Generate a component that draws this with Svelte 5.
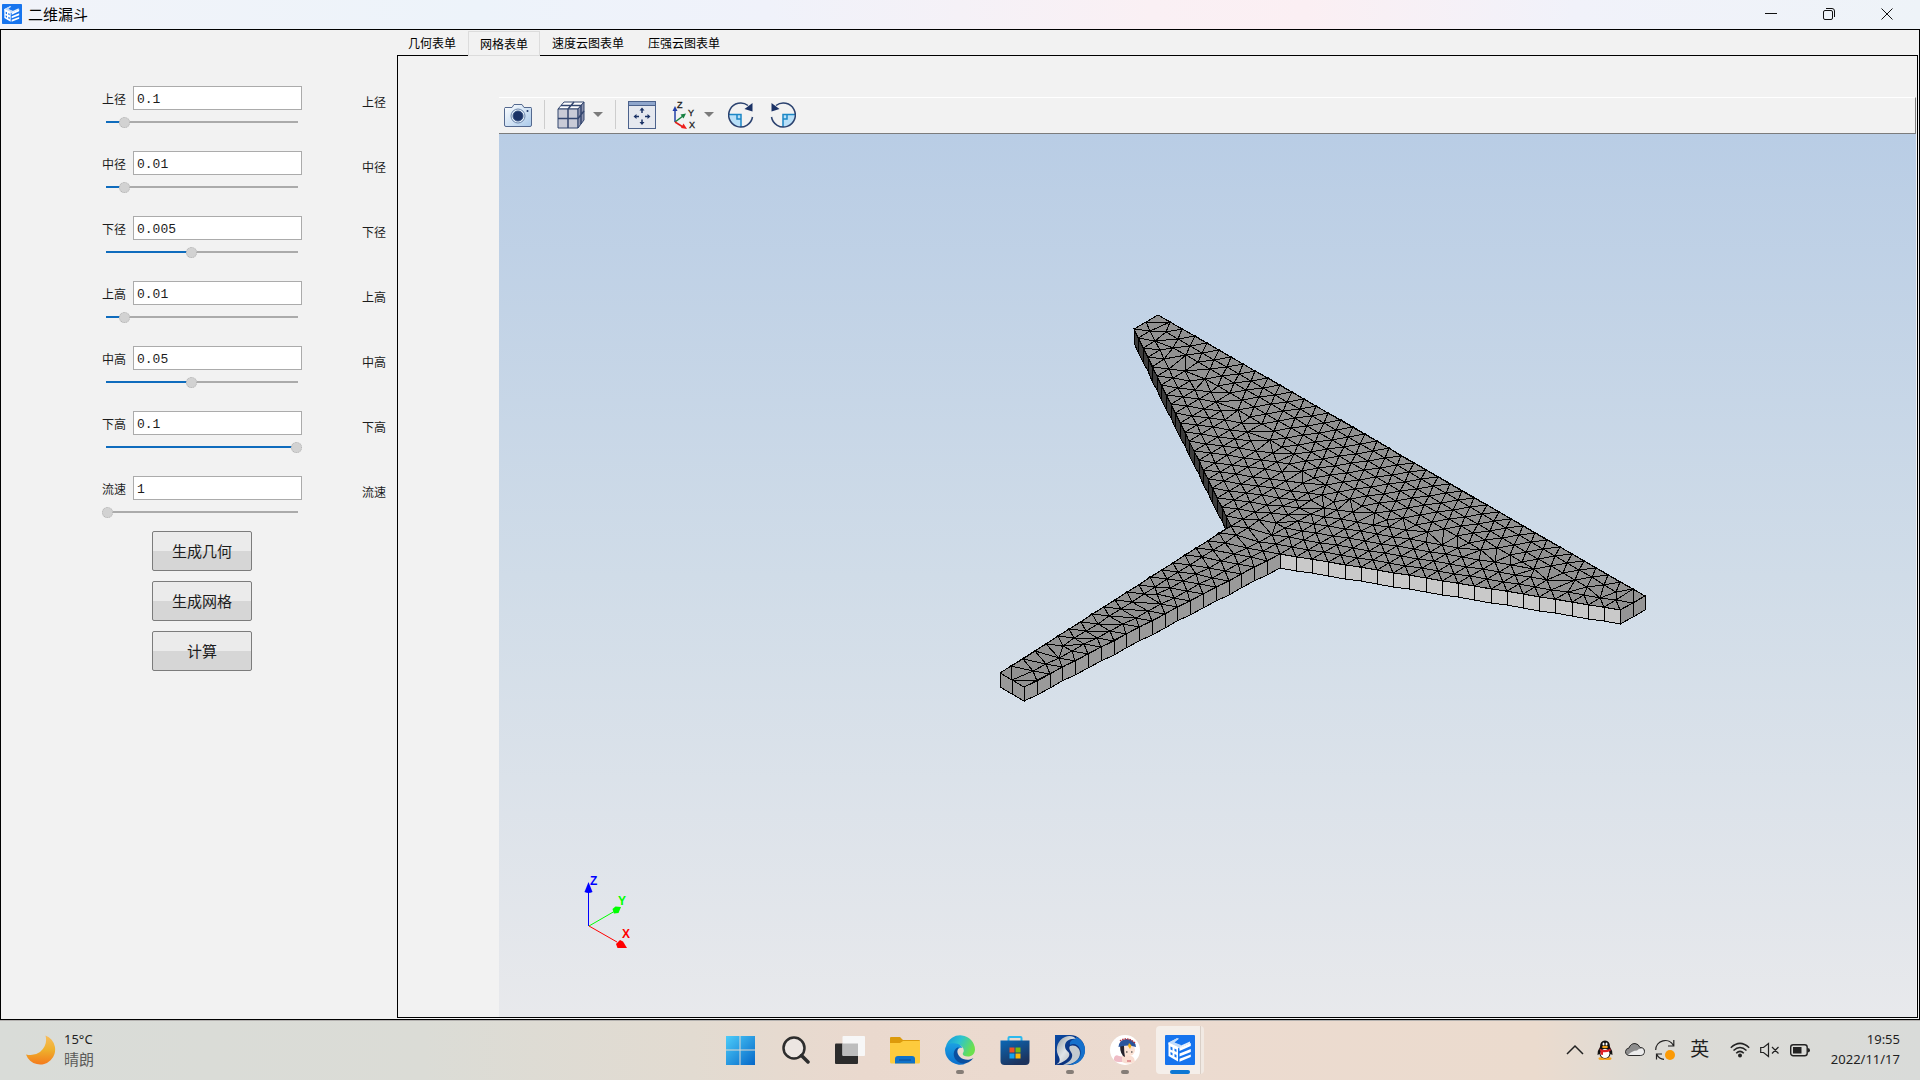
<script>
  const tabs = ["几何表单", "网格表单", "速度云图表单", "压强云图表单"]
  let activeTab = $state("网格表单")

  let fields = $state([
    { id: "top-radius", label: "上径", value: "0.1", level: 10 },
    { id: "mid-radius", label: "中径", value: "0.01", level: 10 },
    { id: "low-radius", label: "下径", value: "0.005", level: 45 },
    { id: "top-height", label: "上高", value: "0.01", level: 10 },
    { id: "mid-height", label: "中高", value: "0.05", level: 45 },
    { id: "low-height", label: "下高", value: "0.1", level: 100 },
    { id: "speed", label: "流速", value: "1", level: 1 },
  ])

  const actions = ["生成几何", "生成网格", "计算"]

  // funnel outline, model units scaled to screen
  const SCALE = 2810
  const STEP = 0.005 * SCALE
  const DEPTH = 14
  const [r1, r2, r3] = [0.1, 0.01, 0.005].map(r => r * SCALE)
  const [h1, h2, h3] = [0.01, 0.05, 0.1].map(h => h * SCALE)
  const outline = [
    [-r1, 0],
    [r1, 0],
    [r1, -h1],
    [r2, -h1 - h2],
    [r3, -h1 - h2 - h3],
    [-r3, -h1 - h2 - h3],
    [-r2, -h1 - h2],
    [-r1, -h1],
  ]

  const project = ([x, y]) => [
    659 + (x + r1 + y) * 0.866,
    181 + (x + r1 - y) * 0.5,
  ]

  const edges = outline.map((a, i) => {
    const b = outline[(i + 1) % outline.length]
    const length = Math.hypot(b[0] - a[0], b[1] - a[1])
    const count = Math.round(length / STEP)
    const dir = [(b[0] - a[0]) / length, (b[1] - a[1]) / length]
    return { a, b, length, count, dir, step: length / count }
  })

  function inside([x, y]) {
    let hit = false
    for (const { a, b } of edges) {
      if (a[1] > y !== b[1] > y) {
        const cross = a[0] + ((y - a[1]) / (b[1] - a[1])) * (b[0] - a[0])
        if (x < cross) hit = !hit
      }
    }
    return hit
  }

  function distance([x, y], { a, dir, length }) {
    const t = (x - a[0]) * dir[0] + (y - a[1]) * dir[1]
    const c = Math.max(0, Math.min(length, t))
    return Math.hypot(x - a[0] - c * dir[0], y - a[1] - c * dir[1])
  }

  // rows of points grow inwards from every side until they meet
  function seed() {
    const points = []
    for (const e of edges) {
      for (let i = 0; i < e.count; i++) {
        const t = i * e.step
        points.push([e.a[0] + t * e.dir[0], e.a[1] + t * e.dir[1]])
      }
    }
    for (let row = 1; row < 20; row++) {
      for (const e of edges) {
        if (e.count < 3) continue
        const off = row * STEP * 0.866
        for (let i = -12; i < e.count + 12; i++) {
          const t = (i + (row % 2) / 2) * e.step
          const p = [
            e.a[0] + t * e.dir[0] + off * e.dir[1],
            e.a[1] + t * e.dir[1] - off * e.dir[0],
          ]
          if (!inside(p)) continue
          const own = distance(p, e)
          if (edges.some(o => o.count > 2 && distance(p, o) < own - 4)) continue
          if (points.some(q => Math.hypot(p[0] - q[0], p[1] - q[1]) < STEP * 0.72)) continue
          points.push(p)
        }
      }
    }
    return points
  }

  function circle(pts, ids) {
    const [[ax, ay], [bx, by], [cx, cy]] = ids.map(i => pts[i])
    const d = 2 * (ax * (by - cy) + bx * (cy - ay) + cx * (ay - by))
    const a2 = ax * ax + ay * ay
    const b2 = bx * bx + by * by
    const c2 = cx * cx + cy * cy
    const x = (a2 * (by - cy) + b2 * (cy - ay) + c2 * (ay - by)) / d
    const y = (a2 * (cx - bx) + b2 * (ax - cx) + c2 * (bx - ax)) / d
    return { ids, x, y, r: Math.hypot(ax - x, ay - y) }
  }

  function triangulate(points) {
    const n = points.length
    const pts = [...points, [-9000, -7000], [9100, -7000], [30, 9000]]
    let tris = [circle(pts, [n, n + 1, n + 2])]
    for (let i = 0; i < n; i++) {
      const [x, y] = pts[i]
      const rim = new Map()
      const keep = []
      for (const t of tris) {
        if (Math.hypot(x - t.x, y - t.y) > t.r - 1e-7) {
          keep.push(t)
          continue
        }
        for (let k = 0; k < 3; k++) {
          const pair = [t.ids[k], t.ids[(k + 1) % 3]]
          const key = Math.min(...pair) + "-" + Math.max(...pair)
          if (rim.has(key)) rim.delete(key)
          else rim.set(key, pair)
        }
      }
      for (const pair of rim.values()) {
        const [p, q] = pair.map(k => pts[k])
        const area = (q[0] - p[0]) * (y - p[1]) - (q[1] - p[1]) * (x - p[0])
        if (Math.abs(area) > 1e-6) keep.push(circle(pts, [...pair, i]))
      }
      tris = keep
    }
    return tris
      .filter(t => t.ids.every(i => i < n))
      .map(t => t.ids.map(i => pts[i]))
      .filter(([a, b, c]) =>
        inside([(a[0] + b[0] + c[0]) / 3, (a[1] + b[1] + c[1]) / 3])
      )
  }

  const toPath = pts => "M" + pts.map(p => p.map(Math.round).join(" ")).join("L") + "Z"

  const outlinePath = toPath(outline.map(project))
  const meshPath = triangulate(seed())
    .map(t => toPath(t.map(project)))
    .join("")

  function wall(index) {
    const { a, dir, count, step } = edges[index]
    let d = ""
    for (let i = 0; i < count; i++) {
      const [p, q] = [i, i + 1].map(k =>
        project([a[0] + k * step * dir[0], a[1] + k * step * dir[1]])
      )
      d += toPath([p, q, [q[0], q[1] + DEPTH], [p[0], p[1] + DEPTH]])
    }
    return d
  }

  const walls = [
    { d: wall(6), fill: "#3b3b3b" },
    { d: wall(1), fill: "#959595" },
    { d: wall(2), fill: "#c9c9c9" },
    { d: wall(3), fill: "#9a9a9a" },
    { d: wall(4), fill: "#999999" },
  ]
</script>

{#snippet appIcon()}
  <svg class="app-icon" viewBox="0 0 30 30" aria-hidden="true">
    <rect width="30" height="30" rx="1" fill="#1674ee" />
    <path d="M3.500 7.500 12 3.200 13.500 4 8 7.500 16 10.500 25 6.500V8.500L14.500 13.500 3.500 9.500Z" fill="#e4effd" />
    <path d="M12 3.200 14 3.600 9.500 7.500 16 10 14.500 13 3.500 8Z" fill="#c3dcfb" />
    <path d="M14.500 13 25.800 8V11L14.500 16ZM14.500 18.500 25.800 14V17L14.500 21.500ZM14.500 23.800 25.800 19.500V22L14.500 26.800Z" fill="#fff" />
    <path d="M3.500 7.500 13 12V26.500L3.500 21ZM5.500 11.500V14.500L7.500 15.500V12.500ZM5.500 17V19.500L7.500 20.500V18ZM9.500 13.500V16L11.500 17V14.500ZM9.500 19V21.700L11.500 22.700V20Z" fill="#fff" fill-rule="evenodd" />
  </svg>
{/snippet}

<div class="desktop">
  <header class="title-bar">
    {@render appIcon()}
    <h1>二维漏斗</h1>
    <div class="window-buttons">
      <button aria-label="最小化">
        <svg viewBox="0 0 14 14"><path d="M1 6.500H13" /></svg>
      </button>
      <button aria-label="向下还原">
        <svg viewBox="0 0 14 14">
          <rect x="1.500" y="3.500" width="9" height="9" rx="1.500" />
          <path d="M4 1.500H10Q12.500 1.500 12.500 4V10" />
        </svg>
      </button>
      <button aria-label="关闭">
        <svg viewBox="0 0 14 14"><path d="M1.500 1.500 12.500 12.500M12.500 1.500 1.500 12.500" /></svg>
      </button>
    </div>
  </header>

  <main class="client">
    <form class="params" onsubmit={e => e.preventDefault()}>
      <div class="fields">
        {#each fields as field (field.id)}
          <div class="field">
            <div class="control">
              <div class="entry">
                <label for={field.id}>{field.label}</label>
                <input id={field.id} type="text" bind:value={field.value} />
              </div>
              <input
                id="{field.id}-range"
                type="range"
                min="1"
                max="100"
                bind:value={field.level}
                style="--fill: {((field.level - 1) / 99) * 100}%"
              />
            </div>
            <label class="side-label" for="{field.id}-range">{field.label}</label>
          </div>
        {/each}
      </div>
      <div class="actions">
        {#each actions as action}
          <button type="button">{action}</button>
        {/each}
      </div>
    </form>

    <section class="results">
      <div class="tabs" role="tablist">
        {#each tabs as tab}
          <button
            role="tab"
            class:active={tab === activeTab}
            aria-selected={tab === activeTab}
            onclick={() => (activeTab = tab)}>{tab}</button>
        {/each}
      </div>

      <div class="panel" role="tabpanel">
        <div class="toolbar">
          <button aria-label="截图">
            <svg width="28" height="28" viewBox="0 0 28 28">
              <defs>
                <linearGradient id="cam" x2="1" y2="1">
                  <stop offset="0" stop-color="#fff" />
                  <stop offset="1" stop-color="#a9c9ea" />
                </linearGradient>
              </defs>
              <path d="M1 6.500H8L10 3.500H18L20 6.500H27Q27.500 6.500 27.500 7.500V24Q27.500 25.500 26 25.500H2Q.500 25.500 .500 24V7.500Z" fill="url(#cam)" stroke="#54698f" />
              <circle cx="14" cy="15" r="7" fill="#e3eef9" stroke="#6c86ad" />
              <circle cx="14" cy="15" r="5" fill="#1b3266" stroke="#34507f" />
              <circle cx="23.500" cy="10" r="1" fill="#1b3266" />
            </svg>
          </button>
          <span class="separator"></span>
          <button class="split" aria-label="显示模式">
            <svg width="28" height="28" viewBox="0 0 28 28" stroke="#33466f" stroke-linejoin="round">
              <path d="M1 8 7 1H27L21 8Z" fill="#fff" />
              <path d="M1 8H21V27H1Z" fill="#c9cbd7" />
              <path d="M21 8 27 1V19L21 27Z" fill="#8d93ae" />
              <path d="M11 8V27M1 17.500H21L27 10M11 8 17 1M4 4.500H24V23" fill="none" stroke-width="1.500" />
            </svg>
            <span class="caret"></span>
          </button>
          <span class="separator"></span>
          <button aria-label="适应窗口">
            <svg width="28" height="28" viewBox="0 0 28 28">
              <rect x=".500" y=".500" width="27" height="27" fill="#e5e8ef" stroke="#4c628c" />
              <path d="M1 1H27V4H1Z" fill="#8fa6cc" />
              <path d="M1 4.500H27" stroke="#4c628c" />
              <path d="M14 8V12M14 18.500V22M7 15.500H11M17 15.500H21" stroke="#1b3266" stroke-width="1.500" />
              <path d="M14 6.500 16.500 9.500H11.500ZM14 24 11.500 21H16.500ZM5.500 15.500 8.500 13V18ZM22.500 15.500 19.500 13V18Z" fill="#1b3266" />
            </svg>
          </button>
          <button class="split axes" aria-label="视图方向">
            <svg width="24" height="28" viewBox="0 0 24 28">
              <path d="M3 21V8" stroke="#2340a8" stroke-width="1.500" />
              <path d="M3 5 5.500 10H.500Z" fill="#2340a8" />
              <path d="M3 21 11 15" stroke="#168040" stroke-width="1.500" />
              <path d="M14 12.500 11.500 17.500 8.500 13.500Z" fill="#168040" />
              <path d="M3 21 11 26" stroke="#e0201b" stroke-width="1.500" />
              <path d="M15 28 9 27 11.500 22.500Z" fill="#f01f1b" />
              <g font-size="9" fill="#222" stroke="#222" stroke-width=".3">
                <text x="5" y="7">Z</text>
                <text x="16" y="15">Y</text>
                <text x="17" y="27">X</text>
              </g>
            </svg>
            <span class="caret"></span>
          </button>
          <button class="turn" aria-label="顺时针旋转">
            <svg width="26" height="28" viewBox="0 0 26 28" fill="none">
              <path d="M1 14H13V25.500A12 12 0 0 1 1 14Z" fill="#b9e0f8" />
              <path d="M1 13.500H13V26M9 13.500V18H13" stroke="#1b87c6" stroke-width="1.500" />
              <path d="M20 4.500A12 12 0 1 0 24.500 16" stroke="#2b426f" stroke-width="1.500" />
              <path d="M24.500 2V10.500L16.500 8Z" fill="#1b3266" />
            </svg>
          </button>
          <button class="turn" aria-label="逆时针旋转">
            <svg width="26" height="28" viewBox="0 0 26 28" fill="none">
              <path d="M25 14H13V25.500A12 12 0 0 0 25 14Z" fill="#b9e0f8" />
              <path d="M25 13.500H13V26M17 13.500V18H13" stroke="#1b87c6" stroke-width="1.500" />
              <path d="M6 4.500A12 12 0 1 1 1.500 16" stroke="#2b426f" stroke-width="1.500" />
              <path d="M1.500 2V10.500L9.500 8Z" fill="#1b3266" />
            </svg>
          </button>
        </div>

        <div class="viewport">
          <svg viewBox="0 0 1417 883" role="img" aria-label="漏斗网格">
            <g stroke="#000" stroke-width="1" shape-rendering="crispEdges">
              {#each walls as w}
                <path d={w.d} fill={w.fill} />
              {/each}
              <path d={outlinePath} fill="#919191" />
              <path d={meshPath} fill="none" />
            </g>
            <g class="triad">
              <path d="M89.500 792V757" stroke="#00f" />
              <path d="M89.500 748 93.500 758Q89.500 760 85.500 758Z" fill="#00f" />
              <path d="M90 792 116 777" stroke="#0f0" />
              <path d="M122 773 119.500 779 115 779.500 113.500 775 116.500 772.500Z" fill="#0f0" />
              <path d="M90 792 118 808" stroke="red" />
              <path d="M128 814 118.500 814 117 810 121 806 124 807.500Z" fill="red" />
              <text x="91" y="751" fill="#00f">Z</text>
              <text x="119" y="771" fill="#0f0">Y</text>
              <text x="123" y="804" fill="red">X</text>
            </g>
          </svg>
        </div>
      </div>
    </section>
  </main>

  <footer class="taskbar">
    <button class="weather">
      <svg width="30" height="30" viewBox="0 0 30 30">
        <defs>
          <linearGradient id="moon" x2="0" y2="1">
            <stop offset="0" stop-color="#f8bd5c" />
            <stop offset=".5" stop-color="#eeb02c" />
            <stop offset="1" stop-color="#f47a1c" />
          </linearGradient>
        </defs>
        <path d="M19.500 .500A15 15 0 1 1 0 19.500Q8 21.500 14 17Q22 10.500 19.500 .500Z" fill="url(#moon)" />
      </svg>
      <span class="lines"><span>15°C</span><span class="muted">晴朗</span></span>
    </button>

    <nav class="apps" aria-label="任务栏">
      <button aria-label="开始">
        <svg viewBox="0 0 30 30">
          <defs>
            <linearGradient id="win" x2="1" y2="1" gradientUnits="userSpaceOnUse" gradientTransform="scale(30)">
              <stop offset="0" stop-color="#4fd0fb" />
              <stop offset="1" stop-color="#0567c8" />
            </linearGradient>
          </defs>
          <path d="M1 1H14.500V14.500H1ZM15.500 1H30V14.500H15.500ZM1 15.500H14.500V30H1ZM15.500 15.500H30V30H15.500Z" fill="url(#win)" />
        </svg>
      </button>
      <button aria-label="搜索">
        <svg viewBox="0 0 30 30" fill="none" stroke="#2d2d2d">
          <circle cx="14" cy="13" r="10.500" fill="#ece6e2" stroke-width="2.500" />
          <path d="M21.500 20.500 28 27" stroke-width="3.500" stroke-linecap="round" />
        </svg>
      </button>
      <button aria-label="任务视图">
        <svg viewBox="0 0 30 30">
          <rect y="8.500" width="23" height="20.500" rx="1" fill="#2c2c2c" />
          <rect x="7.500" y="1" width="22.500" height="20" rx="1" fill="#f7f7f7" />
          <path d="M7.500 8.500H23V21H8.500Q7.500 21 7.500 20Z" fill="#bdbdbd" />
        </svg>
      </button>
      <button aria-label="文件资源管理器">
        <svg viewBox="0 0 30 30">
          <path d="M0 3Q0 2 1 2H10L13 5H29Q30 5 30 6V12H0Z" fill="#dc9a0b" />
          <path d="M0 8H10L13 6H30V27Q30 28.500 28.500 28.500H1.500Q0 28.500 0 27Z" fill="#fdcb3d" />
          <path d="M5 28.500V24Q5 21 8 21H22Q25 21 25 24V28.500Z" fill="#0f72c9" />
          <path d="M9 25H21" stroke="#0a4a94" />
        </svg>
      </button>
      <button class="running" aria-label="Edge">
        <svg viewBox="0 0 30 30">
          <defs>
            <linearGradient id="edge-a" x2="1" y2=".4">
              <stop offset="0" stop-color="#1494dc" />
              <stop offset=".5" stop-color="#2cc3d0" />
              <stop offset="1" stop-color="#6be04e" />
            </linearGradient>
            <linearGradient id="edge-b" x2="0" y2="1">
              <stop offset="0" stop-color="#1ba0e2" />
              <stop offset="1" stop-color="#0b6fce" />
            </linearGradient>
          </defs>
          <path d="M1 11A14.800 14.800 0 0 1 30 14.500C30 19 26.500 21.500 23 21.500C19 21.500 17 20 18 18C20 15 18 11 14 10Q7 8 1 11Z" fill="url(#edge-a)" />
          <path d="M0 15C0 9 5 8 9 8.200C14 8.500 17 11 17.500 13C13 12 11 16 12 20C13 25 17 28 21 28.500A15 15 0 0 1 0 15Z" fill="url(#edge-b)" />
          <path d="M12.500 12.500C8 15 7.500 21 11 25C15 30 23 30 28.500 23C24 26 18 25 15 22C12 19 11.500 15 14 12.500Z" fill="#0b4f9f" />
        </svg>
      </button>
      <button aria-label="应用商店">
        <svg viewBox="0 0 30 30">
          <defs>
            <linearGradient id="store" x2=".5" y2="1">
              <stop offset="0" stop-color="#0b68b6" />
              <stop offset="1" stop-color="#1c335d" />
            </linearGradient>
          </defs>
          <path d="M8.500 6V3Q8.500 2 9.500 2H20.500Q21.500 2 21.500 3V6" fill="none" stroke="#2cb9ee" stroke-width="2" />
          <path d="M.500 5.500H29.500V26Q29.500 30 25.500 30H4.500Q.500 30 .500 26Z" fill="url(#store)" />
          <path d="M9.500 12.500H14.500V17.500H9.500Z" fill="#f15124" />
          <path d="M15.500 12.500H20.500V17.500H15.500Z" fill="#7fb90a" />
          <path d="M9.500 18.500H14.500V23.500H9.500Z" fill="#15a2ee" />
          <path d="M15.500 18.500H20.500V23.500H15.500Z" fill="#fdb809" />
        </svg>
      </button>
      <button class="running" aria-label="仿真平台">
        <svg viewBox="0 0 30 30">
          <defs>
            <linearGradient id="swirl" x2="1" y2="1">
              <stop offset="0" stop-color="#0a4ba5" />
              <stop offset=".6" stop-color="#0b2f7a" />
              <stop offset="1" stop-color="#1480d8" />
            </linearGradient>
            <linearGradient id="steel" x2="1" y2="1">
              <stop offset="0" stop-color="#8d979f" />
              <stop offset=".5" stop-color="#dfe4e8" />
              <stop offset="1" stop-color="#9fa7ae" />
            </linearGradient>
          </defs>
          <path d="M0 0H15A15 15 0 1 1 15 30H0Z" fill="url(#swirl)" />
          <path d="M0 30C5 28 6 25 3 20C0 13 3 5 10 2C14 0 19 1 21 4C15 3 10 6 10 11C10 15 13 16 14 18C16 22 10 27 0 30Z" fill="url(#steel)" />
          <path d="M15 11C20 9 25 13 25 18C25 24 19 30 8 30C15 27 18 23 17 19C16 16 13 14 15 11Z" fill="#c3cacf" />
          <path d="M21 2C27 4 30 10 30 15C30 23 23 30 14 30C24 27 28 20 25 14C23 9 18 8 15 10C14 6 18 4 21 4Z" fill="#1470cc" />
        </svg>
      </button>
      <button class="running" aria-label="聊天">
        <svg viewBox="0 0 30 30">
          <circle cx="15" cy="15" r="15" fill="#fff" />
          <path d="M9 21Q5 19 4 23Q3 27 9 27H14V22Z" fill="#efbcc6" />
          <path d="M12 20Q19 18 24 23L25 27Q18 30 12 27Z" fill="#f9ded2" />
          <circle cx="19" cy="15" r="6" fill="#fbe3d6" />
          <path d="M10 10H14Q14 17 15 22Q10 20 10 10Z" fill="#26222d" />
          <path d="M8.500 12Q9 5 16 4Q25 4 26 12Q18 9 8.500 12Z" fill="#28549c" />
          <path d="M10 6Q17 1 25 8" fill="none" stroke="#b4323d" stroke-width="1.500" stroke-dasharray="1.500 1" />
          <path d="M19 8 21.500 10.500 20 14 18 11Z" fill="#efb21b" />
          <path d="M16 17H17.500M21 17H22.500" stroke="#222" />
          <path d="M17 26H21" stroke="#c9515c" />
        </svg>
      </button>
      <button class="running current" aria-label="二维漏斗">
        {@render appIcon()}
      </button>
    </nav>

    <div class="tray">
      <button aria-label="显示隐藏的图标">
        <svg viewBox="0 0 20 20" fill="none" stroke="#222" stroke-width="1.500"><path d="M2 14 10 6 18 14" /></svg>
      </button>
      <button aria-label="QQ">
        <svg viewBox="0 0 20 20">
          <ellipse cx="7" cy="18.500" rx="3.500" ry="1.500" fill="#f5a21b" />
          <ellipse cx="13" cy="18.500" rx="3.500" ry="1.500" fill="#f5a21b" />
          <path d="M10 .500Q15 .500 15 7Q18 11 17.500 15L15.500 14Q15 18 10 18.500Q5 18 4.500 14L2.500 15Q2 11 5 7Q5 .500 10 .500Z" fill="#111" />
          <ellipse cx="10" cy="13.500" rx="4.500" ry="4.500" fill="#fff" />
          <ellipse cx="8.500" cy="4" rx="1" ry="1.500" fill="#fff" />
          <ellipse cx="11.500" cy="4" rx="1" ry="1.500" fill="#fff" />
          <ellipse cx="10" cy="7" rx="3" ry="1.200" fill="#f5a21b" />
          <path d="M4.500 8.500Q10 11.500 15.500 8.500V11Q12 12.500 8 12.200V15L5.500 14.500V11.500Z" fill="#e0222b" />
        </svg>
      </button>
      <button aria-label="OneDrive">
        <svg viewBox="0 0 20 20" stroke="#2b2b2b">
          <path d="M5 15.500Q.500 15.500 .500 11.500Q.800 8.500 4 8Q5.500 3.500 10 3.500Q13.500 3.800 15 7.500Q19.500 7.500 19.500 11.500Q19.500 15.500 15.500 15.500Z" fill="#8d8d8d" />
          <path d="M3 15Q7 10.500 12 10.500Q14 8 17.500 8.500Q19 10 19 12Q18.500 15 15.500 15Z" fill="#ececec" stroke="none" />
        </svg>
      </button>
      <button aria-label="Windows 更新">
        <svg viewBox="0 0 20 20" fill="none" stroke="#222" stroke-width="1.200">
          <path d="M.700 10A9.500 9.500 0 0 1 18.500 5.500M18.800 0V6H13M1.500 19.500V14H7M1.800 14.500Q4 19 9 19.300" />
          <circle cx="15" cy="15" r="5" fill="#fb9a06" stroke="none" />
        </svg>
      </button>
      <button class="ime">英</button>
      <button aria-label="网络">
        <svg viewBox="0 0 20 20" fill="none" stroke="#222" stroke-width="1.500">
          <path d="M.800 7.800Q10 -1 19.200 7.800M3.500 10.500Q10 4.500 16.500 10.500M6.200 13.200Q10 9.500 13.800 13.200" />
          <circle cx="10" cy="15.500" r="2" fill="#222" stroke="none" />
        </svg>
      </button>
      <button aria-label="音量">
        <svg viewBox="0 0 20 20" fill="none" stroke="#222" stroke-width="1.200">
          <path d="M.700 7.500H3.500L8.500 3.500V16.500L3.500 12.500H.700ZM12 7 18.500 13.500M18.500 7 12 13.500" />
        </svg>
      </button>
      <button aria-label="电池">
        <svg viewBox="0 0 20 20">
          <rect x=".700" y="4.700" width="16.500" height="11" rx="2.500" fill="none" stroke="#222" stroke-width="1.400" />
          <rect x="3" y="7" width="8.500" height="6.500" fill="#222" />
          <path d="M17.500 8Q20 8 20 10.200Q20 12.500 17.500 12.500Z" fill="#222" />
        </svg>
      </button>
      <button class="clock lines"><span>19:55</span><span>2022/11/17</span></button>
    </div>
  </footer>
</div>

<style>
  :global(body) {
    margin: 0;
  }

  .desktop {
    display: flex;
    flex-direction: column;
    min-height: 100vh;
    background: #f2f2f2;
    color: #000;
    font-family: "Liberation Sans", "Noto Sans CJK SC", sans-serif;
    font-size: 12px;
  }

  button {
    padding: 0;
    border: 0;
    background: none;
    color: inherit;
    font: inherit;
  }

  svg {
    display: block;
  }

  .title-bar {
    box-sizing: border-box;
    display: flex;
    align-items: center;
    height: 29px;
    padding: 0 4px 2px 2px;
    background: linear-gradient(to right, #f1f3f9, #edf3fa 25%, #f0f2fa 40%, #faf0f4 60%, #fbeff3 68%, #f1f2fa 82%, #eef3f8);
  }

  .title-bar .app-icon {
    width: 20px;
    height: 20px;
  }

  h1 {
    flex: 1;
    margin: 0 6px;
    font-family: "Noto Sans CJK SC", sans-serif;
    font-size: 15px;
    font-weight: 400;
    line-height: 20px;
  }

  .window-buttons {
    display: flex;
  }

  .window-buttons button {
    display: grid;
    place-items: center;
    width: 58px;
    height: 26px;
  }

  .window-buttons svg {
    width: 14px;
    height: 14px;
    fill: none;
    stroke: #111;
  }

  .client {
    display: flex;
    flex: 1;
    border: 1px solid #000;
  }

  .params {
    flex: none;
    box-sizing: border-box;
    width: 396px;
    padding: 56px 11px 0 101px;
    color: #1c1c1c;
    font-family: "Noto Sans CJK SC", sans-serif;
  }

  .fields {
    display: flex;
    flex-direction: column;
    gap: 21px;
  }

  .field {
    display: flex;
    justify-content: space-between;
    height: 44px;
  }

  .control {
    display: flex;
    flex-direction: column;
    gap: 4px;
    width: 200px;
  }

  .entry {
    display: flex;
    align-items: center;
    gap: 7px;
  }

  .side-label {
    line-height: 32px;
  }

  input[type="text"] {
    flex: 1;
    box-sizing: border-box;
    min-width: 0;
    height: 24px;
    padding: 2px 3px 0;
    border: 1px solid #ababab;
    border-radius: 0;
    background: #fff;
    color: #1c1c1c;
    font-family: "Liberation Mono", monospace;
    font-size: 13px;
  }

  input[type="range"] {
    appearance: none;
    width: 100%;
    height: 16px;
    margin: 0;
    background: linear-gradient(to right, #0f6cbd var(--fill), #ababab var(--fill)) center / calc(100% - 8px) 2px no-repeat;
  }

  input[type="range"]::-webkit-slider-thumb {
    appearance: none;
    box-sizing: border-box;
    width: 11px;
    height: 11px;
    border: 1px dotted #b2b2b2;
    border-radius: 50%;
    background: #d2d2d2;
  }

  .actions {
    display: flex;
    flex-direction: column;
    align-items: center;
    gap: 10px;
    width: 200px;
    margin-top: 11px;
  }

  .actions button {
    width: 100px;
    height: 40px;
    padding-bottom: 2px;
    border: 1px solid #7c7c7c;
    border-radius: 2px;
    background: linear-gradient(#ebebeb 50%, #d6d6d6 50%);
    font-size: 15px;
  }

  .results {
    display: flex;
    flex: 1;
    flex-direction: column;
    min-width: 0;
    padding: 0 1px 1px 0;
  }

  .tabs {
    display: flex;
    height: 25px;
    font-family: "Noto Sans CJK SC", sans-serif;
  }

  .tabs button {
    padding: 0 12px 0 11px;
    line-height: 26px;
  }

  .tabs button + button {
    padding-left: 12px;
  }

  .tabs button.active {
    z-index: 1;
    margin: 1px 0 -1px;
    padding: 0 11px;
    border: 1px solid #dcdcdc;
    background: #f2f2f2;
    line-height: 24px;
  }

  .panel {
    display: flex;
    flex: 1;
    flex-direction: column;
    padding: 41px 1px 0 101px;
    border: 1px solid #000;
  }

  .toolbar {
    box-sizing: border-box;
    display: flex;
    align-items: center;
    gap: 12px;
    height: 37px;
    padding: 0 0 2px 5px;
    border: solid #7c7c7c;
    border-width: 0 1px 1px 0;
    border-top: 1px solid #fff;
  }

  .separator {
    width: 1px;
    height: 29px;
    background: #cdcdcd;
  }

  .split {
    display: flex;
    align-items: center;
    gap: 8px;
  }

  .axes {
    padding-left: 4px;
  }

  .turn {
    padding: 0 2px;
  }

  .caret {
    border: solid transparent;
    border-width: 5px 5px 0;
    border-top-color: #7b7b7b;
  }

  .viewport {
    display: flex;
    flex: 1;
    background: linear-gradient(#b9cde5, #d0dce8 50%, #e8e9ec);
  }

  .viewport svg {
    width: 100%;
    height: 100%;
  }

  .triad {
    font-size: 12px;
    font-weight: 700;
  }

  .taskbar {
    display: grid;
    grid-template-columns: 1fr auto 1fr;
    align-items: center;
    height: 60px;
    box-shadow: inset 0 1px #b3b1af;
    background: linear-gradient(to right, #d9dcd8, #dbdcd6 22%, #e2dbd1 36%, #ead9ce 45%, #ecdbd0 60%, #ebdbce 80%, #dcdbd6 86%, #d9dbd9);
    color: #1f1f1f;
    font-family: "Noto Sans", "Noto Sans CJK SC", sans-serif;
    font-size: 13px;
  }

  .weather {
    display: flex;
    align-items: center;
    justify-self: start;
    gap: 8px;
    padding-left: 26px;
    text-align: left;
  }

  .lines {
    display: flex;
    flex-direction: column;
    padding-bottom: 2px;
    line-height: 20px;
  }

  .muted {
    color: #5c5c5a;
    font-size: 15px;
  }

  .apps {
    display: flex;
    gap: 7px;
  }

  .apps button {
    position: relative;
    display: grid;
    place-items: center;
    width: 48px;
    height: 48px;
  }

  .apps svg {
    width: 30px;
    height: 30px;
  }

  .running::after {
    position: absolute;
    bottom: 0;
    left: 20px;
    width: 8px;
    height: 4px;
    border-radius: 2px;
    background: #857d77;
    content: "";
  }

  .apps .current {
    border-radius: 4px;
    background: linear-gradient(to right, #f5efea 44px, #d9cfc7 44px 45px, #f1e9e3 45px);
  }

  .current::after {
    left: 14px;
    width: 20px;
    background: #0b77d4;
  }

  .tray {
    display: flex;
    align-items: center;
    justify-self: end;
    gap: 10px;
    padding-right: 20px;
  }

  .tray svg {
    width: 20px;
    height: 20px;
  }

  .ime {
    width: 20px;
    margin: 0 10px 0 5px;
    padding-bottom: 2px;
    font-size: 19px;
    line-height: 24px;
  }

  .clock {
    margin-left: 11px;
    text-align: right;
  }
</style>
